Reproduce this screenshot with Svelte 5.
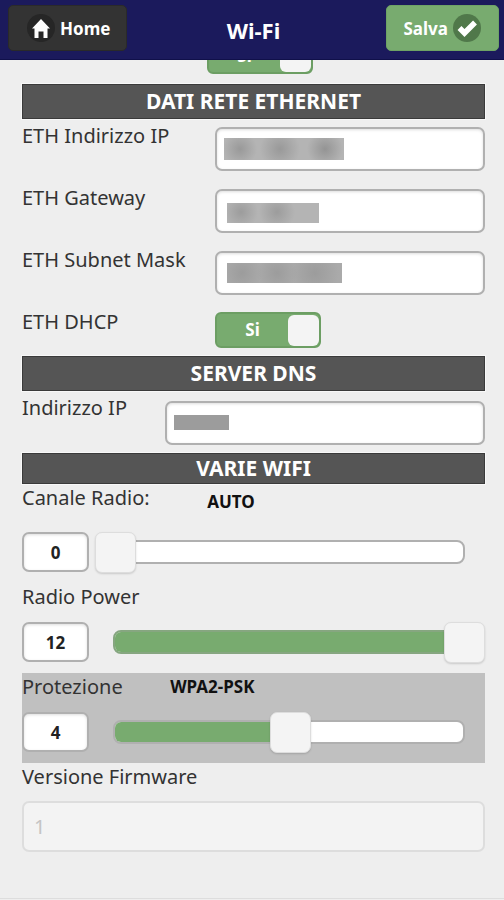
<script>
	let dns = true
	let dhcp = true

	// masked values: size of the grey mask that covers each address
	const eth = [
		{ id: 'ip', label: 'ETH Indirizzo IP', mask: 'long' },
		{ id: 'gateway', label: 'ETH Gateway', mask: 'short' },
		{ id: 'subnet', label: 'ETH Subnet Mask', mask: 'medium' }
	]

	let sliders = [
		{ id: 'channel', label: 'Canale Radio:', note: 'AUTO', value: 0, max: 13 },
		{ id: 'power', label: 'Radio Power', note: '', value: 12, max: 12 },
		{ id: 'security', label: 'Protezione', note: 'WPA2-PSK', value: 4, max: 8 }
	]
	const percent = (s) => (s.value / s.max) * 100
</script>

<header>
	<a class="btn" href="#home">
		<svg width="28" height="28" viewBox="0 0 28 28" aria-hidden="true">
			<circle cx="14" cy="14" r="14" fill="#262626" />
			<path d="M14 5 23 14.500H20.500V24H16.500V17.500H11.500V24H7.500V14.500H5Z" fill="#fff" />
		</svg>
		Home
	</a>
	<h1>Wi-Fi</h1>
	<button class="btn save" type="button">
		Salva
		<svg width="28" height="28" viewBox="0 0 28 28" aria-hidden="true">
			<circle cx="14" cy="14" r="14" fill="#50784a" />
			<path d="M6.500 14 11.500 19 22 8.500" fill="none" stroke="#fff" stroke-width="5.500" />
		</svg>
	</button>
</header>

<main>
	<label class="switch first">
		<input type="checkbox" role="switch" bind:checked={dns} aria-label="Abilita" />
		<span class="state">{dns ? 'Si' : 'No'}</span>
		<span class="knob"></span>
	</label>

	<h2>DATI RETE ETHERNET</h2>
	{#each eth as field}
		<div class="row">
			<label for={field.id}>{field.label}</label>
			<div class="field">
				<input id={field.id} type="text" />
				<span class="mask {field.mask}"></span>
			</div>
		</div>
	{/each}
	<div class="row last">
		<label for="dhcp">ETH DHCP</label>
		<label class="switch">
			<input id="dhcp" type="checkbox" role="switch" bind:checked={dhcp} />
			<span class="state">{dhcp ? 'Si' : 'No'}</span>
			<span class="knob"></span>
		</label>
	</div>

	<h2>SERVER DNS</h2>
	<div class="row wide">
		<label for="dns">Indirizzo IP</label>
		<div class="field">
			<input id="dns" type="text" />
			<span class="mask tiny"></span>
		</div>
	</div>

	<h2 class="slim">VARIE WIFI</h2>
	{#each sliders as s}
		<div class="group {s.id}">
			<div class="caption">
				<label for={s.id}>{s.label}</label>
				<strong>{s.note}</strong>
			</div>
			<div class="control">
				<input class="number" id={s.id} type="text" inputmode="numeric" bind:value={s.value} />
				<div class="slider">
					<div class="track">
						<div class="fill" style="width: {percent(s)}%"></div>
					</div>
					<input type="range" min="0" max={s.max} bind:value={s.value} aria-label={s.label} />
				</div>
			</div>
		</div>
	{/each}

	<div class="firmware">
		<label for="firmware">Versione Firmware</label>
		<input id="firmware" type="text" value="1" disabled />
	</div>
</main>

<style>
	:global(body) {
		background: #eee;
		color: #333;
		font-family: 'Noto Sans', 'Open Sans', sans-serif;
		font-size: 20px;
		line-height: 24px;
	}
	header,
	main,
	header :global(*),
	main :global(*) {
		box-sizing: border-box;
	}
	header {
		position: fixed;
		top: 0;
		left: 0;
		right: 0;
		z-index: 2;
		height: 60px;
		padding: 5px 5px 0 8px;
		display: grid;
		grid-template-columns: 1fr auto 1fr;
		align-items: start;
		background: #1b1a5c;
		border-bottom: 1px solid #10104a;
	}
	h1 {
		margin: 0;
		font-size: 22px;
		line-height: 50px;
		color: #fff;
	}
	.btn {
		justify-self: start;
		display: flex;
		align-items: center;
		gap: 5px;
		height: 46px;
		padding: 0 16px 0 18px;
		border: 1px solid #2a2a2a;
		border-radius: 5px;
		background: #333;
		color: #fff;
		font: bold 17px 'Noto Sans', 'Open Sans', sans-serif;
		text-decoration: none;
	}
	.save {
		justify-self: end;
		padding: 0 17px 0 16px;
		background: #78ab6f;
		border-color: #6ea265;
	}
	main {
		padding: 38px 19px 46px 22px;
		border-bottom: 1px solid #ddd;
	}
	h2 {
		margin: 0 0 5px;
		border: 1px solid #3a3a3a;
		background: #555;
		color: #fff;
		font-size: 21px;
		line-height: 33px;
		text-align: center;
		outline: 1px solid #f8f8f8;
	}
	h2.slim {
		margin: 0;
		line-height: 29px;
	}
	.row {
		display: grid;
		grid-template-columns: 193fr 270fr;
		align-items: start;
		padding-bottom: 15px;
	}
	.row.last {
		padding-bottom: 8px;
	}
	.row.wide {
		grid-template-columns: 143fr 320fr;
		padding-bottom: 8px;
	}
	.field {
		position: relative;
		margin-top: 3px;
	}
	.wide .field {
		margin-top: 5px;
	}
	input {
		font: inherit;
		color: #222;
	}
	.field input,
	.number {
		display: block;
		width: 100%;
		height: 44px;
		padding: 0 12px;
		border: 2px solid #b0b0b0;
		border-radius: 7px;
		background: #fff;
		box-shadow: inset 0 1px 3px #ddd;
	}
	.mask {
		position: absolute;
		top: 12px;
		left: 12px;
		height: 20px;
		pointer-events: none;
		background: #aaa;
	}
	.mask.long {
		top: 11px;
		left: 9px;
		width: 120px;
		height: 22px;
		background:
			radial-gradient(circle at 16px 11px, #999, transparent 17px),
			radial-gradient(circle at 56px 11px, #999, transparent 20px),
			radial-gradient(circle at 101px 11px, #949494, transparent 18px),
			#b4b4b4;
	}
	.mask.short {
		top: 14px;
		width: 92px;
		background:
			radial-gradient(circle at 14px 9px, #9c9c9c, transparent 17px),
			radial-gradient(circle at 50px 9px, #9c9c9c, transparent 18px),
			#b4b4b4;
	}
	.mask.medium {
		width: 115px;
		background:
			radial-gradient(circle at 15px 10px, #9c9c9c, transparent 20px),
			radial-gradient(circle at 50px 10px, #9c9c9c, transparent 20px),
			radial-gradient(circle at 88px 10px, #9c9c9c, transparent 24px),
			#aaa;
	}
	.mask.tiny {
		top: 14px;
		left: 9px;
		width: 55px;
		height: 15px;
		background: #9c9c9c;
	}
	.switch {
		position: relative;
		display: flex;
		align-items: center;
		width: 106px;
		height: 36px;
		margin-top: 2px;
		border: 2px solid #6c9e63;
		border-radius: 6px;
		background: #78ab6f;
		color: #fff;
		font-size: 17px;
		font-weight: bold;
	}
	.switch.first {
		margin: 0 0 10px 185px;
	}
	.switch input {
		position: absolute;
		inset: 0;
		width: 100%;
		height: 100%;
		margin: 0;
		opacity: 0;
	}
	.state {
		flex: 1;
		text-align: center;
	}
	.knob {
		width: 31px;
		height: 31px;
		border-radius: 6px;
		background: #f4f4f4;
	}
	.group {
		padding: 2px 0 11px;
	}
	.security {
		background: #c0c0c0;
	}
	.caption {
		display: grid;
		grid-template-columns: 40% 1fr;
		min-height: 32px;
		margin-bottom: 5px;
	}
	.security .caption {
		grid-template-columns: 32% 1fr;
	}
	.channel .caption {
		margin-bottom: 14px;
	}
	.caption strong {
		color: #111;
		font-size: 17px;
	}
	.channel strong {
		align-self: center;
	}
	.control {
		display: grid;
		grid-template-columns: 67px 1fr;
		gap: 6px;
	}
	.number {
		height: 40px;
		padding: 0;
		font-size: 17px;
		font-weight: bold;
		text-align: center;
	}
	.slider {
		display: grid;
		align-items: center;
	}
	.slider > * {
		grid-area: 1 / 1;
	}
	.track {
		height: 24px;
		margin: 0 20px 0 18px;
		border: 2px solid #b0b0b0;
		border-radius: 8px;
		background: #fff;
		overflow: hidden;
	}
	.fill {
		height: 100%;
		background: #78ab6f;
	}
	.power .track {
		border-color: #86a680;
	}
	.slider input {
		appearance: none;
		width: 100%;
		height: 40px;
		margin: 0;
		background: none;
	}
	.slider input::-webkit-slider-thumb {
		appearance: none;
		width: 41px;
		height: 41px;
		border: 1px solid #ddd;
		border-radius: 7px;
		background: #f4f4f4;
		box-shadow: 0 1px 2px rgba(0, 0, 0, 0.15);
	}
	.firmware {
		padding-top: 2px;
	}
	.firmware label {
		display: block;
		margin-bottom: 12px;
	}
	.firmware input {
		display: block;
		width: 100%;
		height: 51px;
		padding: 0 10px;
		border: 2px solid #ddd;
		border-radius: 7px;
		background: #f3f3f3;
		color: #c4c4c4;
	}
</style>
